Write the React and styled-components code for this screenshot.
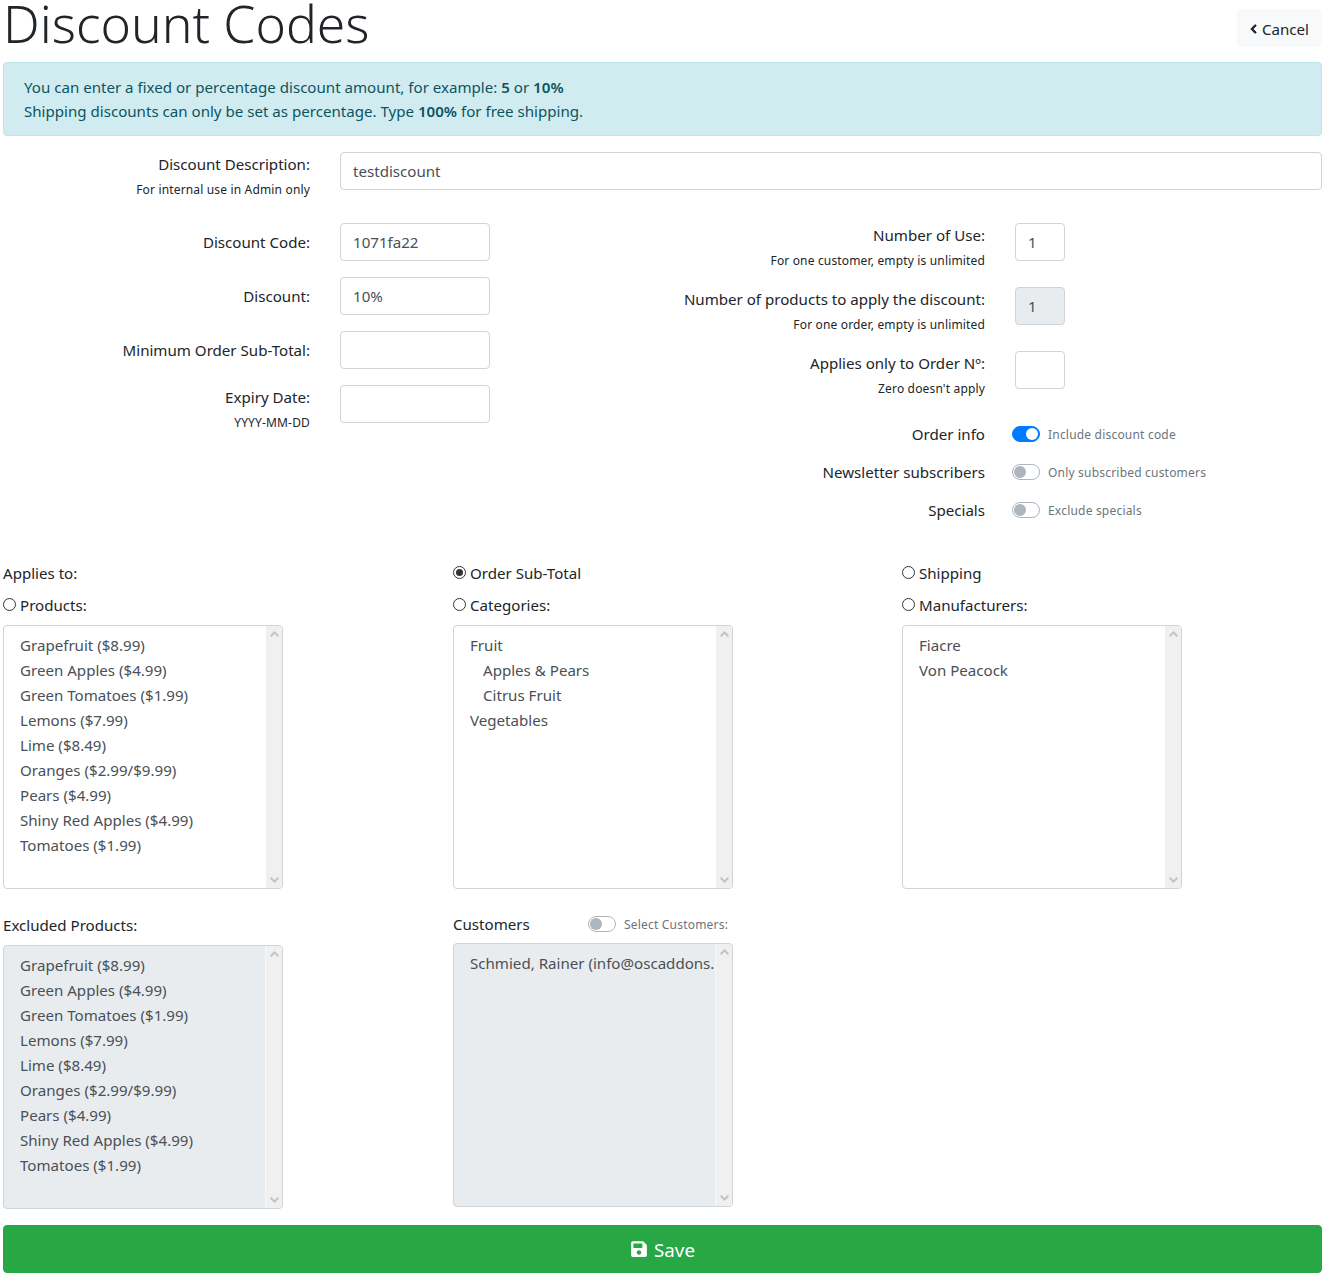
import React from "react";
import styled, { createGlobalStyle } from "styled-components";
import { FaChevronLeft, FaSave } from "react-icons/fa";

const FONT = `"Noto Sans", "Open Sans", "Liberation Sans", sans-serif`;

const GlobalStyle = createGlobalStyle`
  * { box-sizing: border-box; }
  html, body { margin: 0; padding: 0; background: #fff; }
  body {
    font-family: ${FONT};
    font-size: 15.1px;
    line-height: 24px;
    color: #212529;
  }
`;

const Page = styled.div`
  width: 1327px;
  height: 1284px;
  padding: 0 5px 0 3px;
  overflow: hidden;
`;

const Header = styled.div`
  display: flex;
  justify-content: space-between;
  align-items: flex-start;
  height: 72px;
  margin-top: -10px;
`;

const Title = styled.h1`
  margin: 0;
  font-size: 51.6px;
  font-weight: 300;
  line-height: 67px;
`;

const CancelButton = styled.button`
  display: flex;
  align-items: center;
  gap: 5px;
  width: 85px;
  height: 38px;
  margin-top: 19px;
  padding: 2px 0 0 12px;
  border: 1px solid #f8f9fa;
  border-radius: 4px;
  background: #f8f9fa;
  color: #212529;
  font: inherit;
  svg { width: 7px; height: 10px; stroke: currentColor; stroke-width: 50px; }
`;

const Alert = styled.div`
  height: 74px;
  margin-bottom: 16px;
  padding: 12px 20px;
  border: 1px solid #bee5eb;
  border-radius: 4px;
  background: #d1ecf1;
  color: #0c5460;
  b { font-weight: 600; }
`;

const DescriptionRow = styled.div`
  display: grid;
  grid-template-columns: 307px 1fr;
  column-gap: 30px;
  height: 71px;
`;

const Columns = styled.div`
  display: grid;
  grid-template-columns: 659px 1fr;
  height: 338px;
`;

const Stack = styled.div`
  display: flex;
  flex-direction: column;
`;

const FormRow = styled.div`
  display: grid;
  grid-template-columns: ${(p) => p.$labelWidth}px 1fr;
  column-gap: 30px;
  height: ${(p) => p.$height}px;
`;

const LabelBox = styled.div`
  text-align: right;
`;

const Label = styled.div`
  line-height: ${(p) => (p.$centered ? 38 : 24)}px;
`;

const Help = styled.div`
  margin-top: 5px;
  font-size: 12px;
  line-height: 18px;
  letter-spacing: 0.16px;
`;

const TextInput = styled.input`
  display: block;
  width: ${(p) => p.$width || "100%"};
  height: 38px;
  padding: 6px 12px;
  border: 1px solid #ced4da;
  border-radius: 4px;
  background: ${(p) => (p.disabled ? "#e9ecef" : "#fff")};
  color: #495057;
  font: inherit;
  opacity: 1;
`;

const SwitchList = styled.div`
  display: flex;
  flex-direction: column;
  gap: 14px;
  margin-top: 7px;
`;

const SwitchRow = styled.div`
  display: grid;
  grid-template-columns: 323px 1fr;
  column-gap: 27px;
  align-items: center;
  height: 24px;
`;

const SwitchTrack = styled.span`
  display: inline-block;
  position: relative;
  flex: none;
  width: 28px;
  height: 16px;
  border: 1px solid ${(p) => (p.$on ? "#007bff" : "#adb5bd")};
  border-radius: 8px;
  background: ${(p) => (p.$on ? "#007bff" : "#fff")};
  &::after {
    content: "";
    position: absolute;
    top: 1px;
    left: ${(p) => (p.$on ? "13px" : "1px")};
    width: 12px;
    height: 12px;
    border-radius: 50%;
    background: ${(p) => (p.$on ? "#fff" : "#adb5bd")};
  }
`;

const SwitchField = styled.div`
  display: flex;
  align-items: center;
  gap: 8px;
`;

const SwitchText = styled.span`
  padding-top: 2px;
  color: #6c757d;
  font-size: 12px;
  line-height: 18px;
  letter-spacing: 0.2px;
`;

const ChoiceGrid = styled.div`
  display: grid;
  grid-template-columns: 450px 449px 1fr;
`;

const ChoiceColumn = styled.div`
  display: flex;
  flex-direction: column;
  gap: 8px;
`;

const RadioLabel = styled.label`
  display: flex;
  align-items: center;
  gap: 4px;
  height: 24px;
`;

const Radio = styled.input`
  appearance: none;
  display: grid;
  place-items: center;
  width: 13px;
  height: 13px;
  margin: 0 0 1px;
  border: 1px solid #333;
  border-radius: 50%;
  background: #fff;
  &:checked::after {
    content: "";
    width: 7px;
    height: 7px;
    border-radius: 50%;
    background: #333;
  }
`;

const ListBox = styled.div`
  display: flex;
  width: 280px;
  height: 264px;
  border: 1px solid #ced4da;
  border-radius: 4px;
  background: ${(p) => (p.$disabled ? "#e9ecef" : "#fff")};
  overflow: hidden;
`;

const Options = styled.div`
  flex: 1;
  min-width: 0;
  padding: 7px 0 0 16px;
  color: #495057;
  overflow: hidden;
  white-space: nowrap;
`;

const Option = styled.div`
  height: 25px;
  line-height: 25px;
  padding-left: ${(p) => (p.$indent ? 13 : 0)}px;
`;

const ScrollTrack = styled.div`
  flex: none;
  display: flex;
  flex-direction: column;
  justify-content: space-between;
  align-items: center;
  width: ${(p) => (p.$disabled ? 17 : 16)}px;
  padding: 5px 0;
  background: #f0f0f0;
  border-left: ${(p) => (p.$disabled ? "1px solid #f8f8f8" : "none")};
  color: #c2c2c2;
`;

const Arrow = styled.svg`
  display: block;
  width: 9px;
  height: 6px;
  fill: none;
  stroke: currentColor;
  stroke-width: 2;
`;

const LowerGrid = styled(ChoiceGrid)`
  margin-top: 24px;
`;

const CustomersHead = styled.div`
  display: flex;
  align-items: center;
  width: 280px;
  height: 22px;
`;

const CustomersTitle = styled.span`
  width: 135px;
`;

const SaveButton = styled.button`
  display: flex;
  align-items: center;
  justify-content: center;
  gap: 6px;
  width: 100%;
  height: 48px;
  margin-top: 16px;
  padding-top: 2px;
  border: 1px solid #28a745;
  border-radius: 4px;
  background: #28a745;
  color: #fff;
  font-family: ${FONT};
  font-size: 18.8px;
  svg { width: 18px; height: 18px; margin-top: -2px; }
`;

const PRODUCTS = [
  "Grapefruit ($8.99)",
  "Green Apples ($4.99)",
  "Green Tomatoes ($1.99)",
  "Lemons ($7.99)",
  "Lime ($8.49)",
  "Oranges ($2.99/$9.99)",
  "Pears ($4.99)",
  "Shiny Red Apples ($4.99)",
  "Tomatoes ($1.99)",
];

const CATEGORIES = [
  { name: "Fruit" },
  { name: "Apples & Pears", indent: true },
  { name: "Citrus Fruit", indent: true },
  { name: "Vegetables" },
];

function Select({ items, disabled }) {
  return (
    <ListBox $disabled={disabled}>
      <Options>
        {items.map((item) => {
          const name = item.name || item;
          return (
            <Option key={name} $indent={item.indent}>
              {name}
            </Option>
          );
        })}
      </Options>
      <ScrollTrack $disabled={disabled}>
        <Arrow viewBox="0 0 9 6">
          <path d="M0.7 5.2 L4.5 1.4 L8.3 5.2" />
        </Arrow>
        <Arrow viewBox="0 0 9 6">
          <path d="M0.7 0.8 L4.5 4.6 L8.3 0.8" />
        </Arrow>
      </ScrollTrack>
    </ListBox>
  );
}

function Field({ label, help, value, disabled, width, labelWidth, height }) {
  return (
    <FormRow $labelWidth={labelWidth} $height={height}>
      <LabelBox>
        <Label $centered={!help}>{label}</Label>
        {help && <Help>{help}</Help>}
      </LabelBox>
      <TextInput $width={width} defaultValue={value} disabled={disabled} />
    </FormRow>
  );
}

function SwitchLine({ label, text, on }) {
  return (
    <SwitchRow>
      <LabelBox>{label}</LabelBox>
      <SwitchField>
        <SwitchTrack $on={on} />
        <SwitchText>{text}</SwitchText>
      </SwitchField>
    </SwitchRow>
  );
}

export default function App() {
  return (
    <Page>
      <GlobalStyle />
      <Header>
        <Title>Discount Codes</Title>
        <CancelButton>
          <FaChevronLeft /> Cancel
        </CancelButton>
      </Header>
      <Alert>
        You can enter a fixed or percentage discount amount, for example: <b>5</b> or <b>10%</b>
        <br />
        Shipping discounts can only be set as percentage. Type <b>100%</b> for free shipping.
      </Alert>
      <DescriptionRow>
        <LabelBox>
          <Label>Discount Description:</Label>
          <Help>For internal use in Admin only</Help>
        </LabelBox>
        <TextInput defaultValue="testdiscount" />
      </DescriptionRow>
      <Columns>
        <Stack>
          <Field label="Discount Code:" value="1071fa22" width="150px" labelWidth={307} height={54} />
          <Field label="Discount:" value="10%" width="150px" labelWidth={307} height={54} />
          <Field label="Minimum Order Sub-Total:" width="150px" labelWidth={307} height={54} />
          <Field label="Expiry Date:" help="YYYY-MM-DD" width="150px" labelWidth={307} height={54} />
        </Stack>
        <Stack>
          <Field
            label="Number of Use:"
            help="For one customer, empty is unlimited"
            value="1"
            width="50px"
            labelWidth={323}
            height={64}
          />
          <Field
            label="Number of products to apply the discount:"
            help="For one order, empty is unlimited"
            value="1"
            disabled
            width="50px"
            labelWidth={323}
            height={64}
          />
          <Field
            label="Applies only to Order Nº:"
            help="Zero doesn't apply"
            width="50px"
            labelWidth={323}
            height={64}
          />
          <SwitchList>
            <SwitchLine label="Order info" text="Include discount code" on />
            <SwitchLine label="Newsletter subscribers" text="Only subscribed customers" />
            <SwitchLine label="Specials" text="Exclude specials" />
          </SwitchList>
        </Stack>
      </Columns>
      <ChoiceGrid>
        <ChoiceColumn>
          <Label>Applies to:</Label>
          <RadioLabel>
            <Radio type="radio" name="products" />
            Products:
          </RadioLabel>
          <Select items={PRODUCTS} />
        </ChoiceColumn>
        <ChoiceColumn>
          <RadioLabel>
            <Radio type="radio" name="applies" defaultChecked />
            Order Sub-Total
          </RadioLabel>
          <RadioLabel>
            <Radio type="radio" name="categories" />
            Categories:
          </RadioLabel>
          <Select items={CATEGORIES} />
        </ChoiceColumn>
        <ChoiceColumn>
          <RadioLabel>
            <Radio type="radio" name="applies" />
            Shipping
          </RadioLabel>
          <RadioLabel>
            <Radio type="radio" name="manufacturers" />
            Manufacturers:
          </RadioLabel>
          <Select items={["Fiacre", "Von Peacock"]} />
        </ChoiceColumn>
      </ChoiceGrid>
      <LowerGrid>
        <ChoiceColumn>
          <Label>Excluded Products:</Label>
          <Select items={PRODUCTS} disabled />
        </ChoiceColumn>
        <ChoiceColumn>
          <CustomersHead>
            <CustomersTitle>Customers</CustomersTitle>
            <SwitchField>
              <SwitchTrack />
              <SwitchText>Select Customers:</SwitchText>
            </SwitchField>
          </CustomersHead>
          <Select items={["Schmied, Rainer (info@oscaddons.com)"]} disabled />
        </ChoiceColumn>
      </LowerGrid>
      <SaveButton>
        <FaSave /> Save
      </SaveButton>
    </Page>
  );
}
